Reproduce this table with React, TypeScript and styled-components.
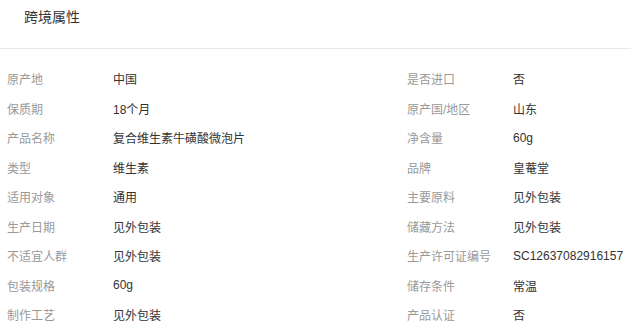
import React from 'react';
import styled, { createGlobalStyle } from 'styled-components';

const GlobalStyle = createGlobalStyle`
    body {
        margin: 0;
        background: #ffffff;
        overflow: hidden;
        font-family: "Liberation Sans", "Noto Sans CJK SC", sans-serif;
    }
`

const Panel = styled.div`
    background: #ffffff;
`

const Header = styled.div`
    height: 48px;
    padding: 0 24px;
    border-bottom: 1px solid #e8e8e8;
`

const Title = styled.h3`
    margin: 0;
    font-size: 14px;
    font-weight: normal;
    line-height: 35px;
    color: #333333;
`

const AttrGrid = styled.div`
    display: grid;
    grid-template-columns: 400px 1fr;
    grid-auto-rows: 29.5px;
    padding: 15px 0 0 7px;
`

const AttrItem = styled.div`
    display: flex;
    align-items: center;
    min-width: 0;
    font-size: 12px;
    white-space: nowrap;
`

const AttrLabel = styled.span`
    width: 106px;
    flex-shrink: 0;
    color: #999999;
`

const AttrValue = styled.span`
    color: #333333;
`

const attrs: [string, string][] = [
    ['原产地', '中国'],
    ['是否进口', '否'],
    ['保质期', '18个月'],
    ['原产国/地区', '山东'],
    ['产品名称', '复合维生素牛磺酸微泡片'],
    ['净含量', '60g'],
    ['类型', '维生素'],
    ['品牌', '皇菴堂'],
    ['适用对象', '通用'],
    ['主要原料', '见外包装'],
    ['生产日期', '见外包装'],
    ['储藏方法', '见外包装'],
    ['不适宜人群', '见外包装'],
    ['生产许可证编号', 'SC12637082916157'],
    ['包装规格', '60g'],
    ['储存条件', '常温'],
    ['制作工艺', '见外包装'],
    ['产品认证', '否'],
]

export const CrossBorderAttrs = () => {
    return (
        <Panel>
            <Header>
                <Title>跨境属性</Title>
            </Header>
            <AttrGrid>
                {attrs.map(([label, value]) => (
                    <AttrItem key={label}>
                        <AttrLabel>{label}</AttrLabel>
                        <AttrValue>{value}</AttrValue>
                    </AttrItem>
                ))}
            </AttrGrid>
        </Panel>
    )
}

const App = () => (
    <React.Fragment>
        <GlobalStyle />
        <CrossBorderAttrs />
    </React.Fragment>
)

export default App
